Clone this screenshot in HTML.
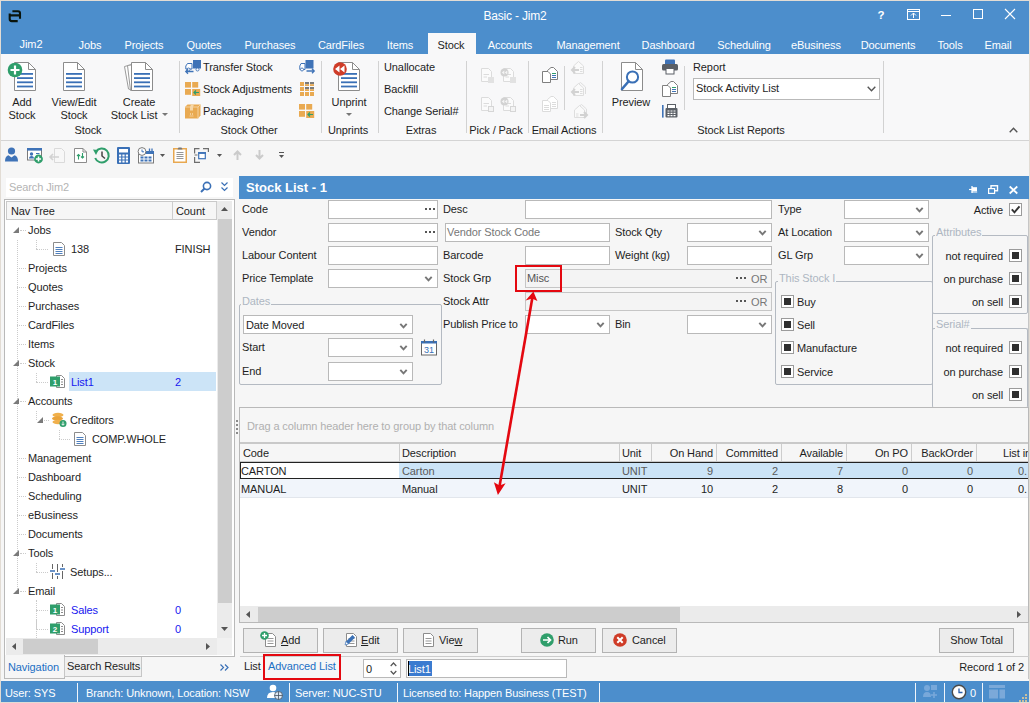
<!DOCTYPE html>
<html><head><meta charset="utf-8"><title>Basic - Jim2</title>
<style>
*{box-sizing:border-box;margin:0;padding:0}
html,body{width:1030px;height:703px;overflow:hidden;background:#f6f6f6}
body{font-family:"Liberation Sans",sans-serif;font-size:11px;color:#1e1e1e;position:relative;letter-spacing:-0.1px}
.a{position:absolute;white-space:nowrap}
.t{position:absolute;white-space:nowrap;line-height:14px;height:14px}
.c{text-align:center}
.r{text-align:right}
.w{color:#fff}
.g{color:#aeb6c2}
.g2{color:#777}
.g3{color:#777}
.bl{color:#1616f0}
svg{position:absolute;overflow:visible}
.inp{position:absolute;background:#fff;border:1px solid #b9b9b9;height:19px}
.inpg{position:absolute;background:#f4f4f4;border:1px solid #c6c6c6;height:19px}
.chev{position:absolute;width:9px;height:6px}
.vsep{position:absolute;width:1px;background:#d2d2d2}
.cb{position:absolute;width:13px;height:13px;border:1px solid #9b9b9b;background:#fff}
.cb i{position:absolute;left:2px;top:2px;width:7px;height:7px;background:#2f2f2f}
.grp{position:absolute;border:1px solid #b4bac2;border-radius:2px}
.btn{position:absolute;height:27px;border:1px solid #b3b3b3;background:#ececec}
</style></head><body>
<!-- TITLE BAR -->
<div class="a" style="left:0;top:0;width:1030px;height:54px;background:#4c8ecc"></div>


<svg style="left:0px;top:0px" width="30" height="30" viewBox="0 0 30 30"><path d="M12.4 11.2H18Q20 11.2 20 13.2V18.7M20 15.4H9.7M9.7 13.6V19Q9.7 21.1 11.8 21.1H17.7" fill="none" stroke="#0a140c" stroke-width="2.1"/></svg>
<div class="t w c" style="left:415px;top:8px;width:200px;font-size:12px;line-height:16px;height:16px;letter-spacing:-0.2px">Basic - Jim2</div>
<div class="t w c" style="left:874px;top:7px;width:14px;font-size:11.500px;font-weight:bold;line-height:16px;height:16px">?</div>
<svg style="left:907px;top:9px" width="13" height="11" viewBox="0 0 13 11"><rect x=".5" y=".5" width="12" height="10" fill="none" stroke="#fff"/><path d="M1 2.5H12M6.5 9V4M4 6.5L6.5 4L9 6.5" fill="none" stroke="#fff"/></svg>
<div class="a" style="left:941px;top:15px;width:10px;height:1px;background:#fff"></div>
<div class="a" style="left:973px;top:9px;width:10px;height:10px;border:1px solid #fff"></div>
<svg style="left:1005px;top:9px" width="10" height="10" viewBox="0 0 10 10"><path d="M0 0L10 10M10 0L0 10" stroke="#fff" stroke-width="1.1"/></svg>
<!--TITLE-->
<div class="a" style="left:428px;top:33px;width:48px;height:22px;background:#f8f8f9"></div>
<div class="t c w" style="left:-9px;top:37px;width:80px">Jim2</div>
<div class="t c w" style="left:50px;top:38px;width:80px">Jobs</div>
<div class="t c w" style="left:104px;top:38px;width:80px">Projects</div>
<div class="t c w" style="left:164px;top:38px;width:80px">Quotes</div>
<div class="t c w" style="left:230px;top:38px;width:80px">Purchases</div>
<div class="t c w" style="left:301px;top:38px;width:80px">CardFiles</div>
<div class="t c w" style="left:360px;top:38px;width:80px">Items</div>
<div class="t c" style="left:411px;top:38px;width:80px">Stock</div>
<div class="t c w" style="left:470px;top:38px;width:80px">Accounts</div>
<div class="t c w" style="left:548px;top:38px;width:80px">Management</div>
<div class="t c w" style="left:628px;top:38px;width:80px">Dashboard</div>
<div class="t c w" style="left:704px;top:38px;width:80px">Scheduling</div>
<div class="t c w" style="left:776px;top:38px;width:80px">eBusiness</div>
<div class="t c w" style="left:848px;top:38px;width:80px">Documents</div>
<div class="t c w" style="left:910px;top:38px;width:80px">Tools</div>
<div class="t c w" style="left:958px;top:38px;width:80px">Email</div>
<!--TABS-->
<!-- RIBBON -->
<div class="a" style="left:0;top:54px;width:1030px;height:87px;background:#f8f8f9;border-bottom:1px solid #d4d4d4"></div>
<svg style="left:14px;top:62px" width="22" height="29" viewBox="0 0 22 29"><path d="M.5 .5H14.5 L21.5 7.5 V28.5 H.5Z" fill="#fff" stroke="#8c8c8c"/><path d="M14.5 .5V7.5 H21.5" fill="none" stroke="#8c8c8c"/><rect x="3" y="11" width="16" height="1.8" fill="#3a70b6"/><rect x="3" y="15.2" width="16" height="1.8" fill="#3a70b6"/><rect x="3" y="19.4" width="16" height="1.8" fill="#3a70b6"/><rect x="3" y="23.6" width="16" height="1.8" fill="#3a70b6"/></svg><svg style="left:7px;top:62px" width="16" height="16" viewBox="0 0 16 16"><circle cx="8" cy="8" r="7.3" fill="#2f9e6b"/><path d="M8 3.5V12.5M3.5 8H12.5" stroke="#fff" stroke-width="2.2"/></svg><div class="t c" style="left:-18px;top:95px;width:80px">Add</div><div class="t c" style="left:-18px;top:108px;width:80px">Stock</div><svg style="left:63px;top:62px" width="22" height="29" viewBox="0 0 22 29"><path d="M.5 .5H14.5 L21.5 7.5 V28.5 H.5Z" fill="#fff" stroke="#8c8c8c"/><path d="M14.5 .5V7.5 H21.5" fill="none" stroke="#8c8c8c"/><rect x="3" y="11" width="16" height="1.8" fill="#3a70b6"/><rect x="3" y="15.2" width="16" height="1.8" fill="#3a70b6"/><rect x="3" y="19.4" width="16" height="1.8" fill="#3a70b6"/><rect x="3" y="23.6" width="16" height="1.8" fill="#3a70b6"/></svg><div class="t c" style="left:34px;top:95px;width:80px">View/Edit</div><div class="t c" style="left:34px;top:108px;width:80px">Stock</div><svg style="left:124px;top:64px" width="12" height="27" viewBox="0 0 12 27"><path d="M.5 2.5L8 .5V26L4.5 25Z" fill="#fff" stroke="#9a9a9a"/><path d="M3.5 1.5L10 .5V26.5H6.5Z" fill="#fff" stroke="#9a9a9a"/></svg><svg style="left:131px;top:62px" width="22" height="29" viewBox="0 0 22 29"><path d="M.5 .5H14.5 L21.5 7.5 V28.5 H.5Z" fill="#fff" stroke="#8c8c8c"/><path d="M14.5 .5V7.5 H21.5" fill="none" stroke="#8c8c8c"/><rect x="3" y="11" width="16" height="1.8" fill="#3a70b6"/><rect x="3" y="15.2" width="16" height="1.8" fill="#3a70b6"/><rect x="3" y="19.4" width="16" height="1.8" fill="#3a70b6"/><rect x="3" y="23.6" width="16" height="1.8" fill="#3a70b6"/></svg><div class="t c" style="left:99px;top:95px;width:80px">Create</div><div class="t c" style="left:94px;top:108px;width:80px">Stock List</div><svg style="left:162px;top:113px" width="6" height="3" viewBox="0 0 6 3"><path d="M0 0H6L3 3Z" fill="#777"/></svg><div class="t c" style="left:48px;top:123px;width:80px">Stock</div><div class="vsep" style="left:179px;top:61px;height:72px"></div><div class="vsep" style="left:321px;top:61px;height:72px"></div><div class="vsep" style="left:378px;top:61px;height:72px"></div><div class="vsep" style="left:466px;top:61px;height:72px"></div><div class="vsep" style="left:528px;top:61px;height:72px"></div><div class="vsep" style="left:602px;top:61px;height:72px"></div><div class="vsep" style="left:883px;top:61px;height:72px"></div><svg style="left:185px;top:60px" width="16" height="13" viewBox="0 0 16 13"><rect x="8" y="0" width="8" height="8.5" fill="#3f73b7"/><path d="M2.5 3.5H7V9H.8V6Z" fill="#fff" stroke="#3f73b7" stroke-width="1"/><circle cx="3.5" cy="9.5" r="1.5" fill="#fff" stroke="#3f73b7" stroke-width=".9"/><circle cx="12.5" cy="9.5" r="1.5" fill="#fff" stroke="#3f73b7" stroke-width=".9"/><path d="M.8 11.5H8.5M3 9.3L.8 11.5L3 13.7" stroke="#3f73b7" stroke-width="1.3" fill="none"/></svg><svg style="left:185px;top:82px" width="16" height="15" viewBox="0 0 16 15"><rect x="0" y="0" width="6" height="5.6" fill="#e9aa52"/><rect x="7.2" y="0" width="6" height="5.6" fill="#e9aa52"/><rect x="0" y="7" width="6" height="5.8" fill="#e9aa52"/><rect x="7.2" y="7" width="8" height="7" fill="#e9aa52"/><path d="M9 10.5H14M11 8.5L9 10.5L11 12.5" stroke="#2f9e6b" stroke-width="1.2" fill="none"/></svg><svg style="left:185px;top:104px" width="16" height="15" viewBox="0 0 16 15"><path d="M0 3L2.5 .5H15.5V11.5L13 14.5H0Z" fill="#e9aa52"/><path d="M0 3H13V14.5M13 3L15.5 .5" stroke="#f6d7a8" fill="none" stroke-width=".9"/><path d="M6 .5L5 3V6.5H8V3L9 .5Z" fill="#f6d7a8"/><path d="M4.5 12H8.5M5.5 9V11M7.5 9V11" stroke="#f6d7a8" stroke-width=".8"/></svg><div class="t" style="left:203px;top:60px">Transfer Stock</div><div class="t" style="left:203px;top:82px">Stock Adjustments</div><div class="t" style="left:203px;top:104px">Packaging</div><svg style="left:299px;top:60px" width="16" height="13" viewBox="0 0 16 13"><rect x="6.5" y="0" width="8" height="8.5" fill="#3f73b7"/><path d="M2 3.5H6V9.5H.8V6Z" fill="#fff" stroke="#3f73b7" stroke-width="1"/><circle cx="3" cy="9.5" r="1.5" fill="#fff" stroke="#3f73b7" stroke-width=".9"/><path d="M7.5 11H15.2M13 8.8L15.2 11L13 13.2" stroke="#3f73b7" stroke-width="1.3" fill="none"/></svg><svg style="left:300px;top:82px" width="14" height="14" viewBox="0 0 14 14"><rect x="0" y="0" width="4" height="4" fill="#e9aa52"/><rect x="0" y="5" width="4" height="4" fill="#e9aa52"/><rect x="0" y="10" width="4" height="4" fill="#e9aa52"/><rect x="5" y="0" width="4" height="2.2" fill="#7b7b7b"/><rect x="5" y="2.2" width="4" height="1.8" fill="#e9aa52"/><rect x="5" y="5" width="4" height="2.2" fill="#7b7b7b"/><rect x="5" y="7.2" width="4" height="1.8" fill="#e9aa52"/><rect x="5" y="10" width="4" height="4" fill="#e9aa52"/><rect x="10" y="0" width="4" height="2.2" fill="#7b7b7b"/><rect x="10" y="2.2" width="4" height="1.8" fill="#e9aa52"/><rect x="10" y="5" width="4" height="2.2" fill="#7b7b7b"/><rect x="10" y="7.2" width="4" height="1.8" fill="#e9aa52"/><rect x="10" y="10" width="4" height="4" fill="#e9aa52"/></svg><svg style="left:299px;top:104px" width="16" height="15" viewBox="0 0 16 15"><rect x="0" y="0" width="6" height="5.6" fill="#e9aa52"/><rect x="7.2" y="0" width="6" height="5.6" fill="#e9aa52"/><rect x="0" y="7" width="6" height="5.8" fill="#e9aa52"/><rect x="7.2" y="7" width="8" height="7" fill="#e9aa52"/><path d="M9 10.5H14M11 8.5L9 10.5L11 12.5" stroke="#2f9e6b" stroke-width="1.2" fill="none"/></svg><div class="t c" style="left:209px;top:123px;width:80px">Stock Other</div><svg style="left:338px;top:62px" width="22" height="29" viewBox="0 0 22 29"><path d="M.5 .5H14.5 L21.5 7.5 V28.5 H.5Z" fill="#fff" stroke="#8c8c8c"/><path d="M14.5 .5V7.5 H21.5" fill="none" stroke="#8c8c8c"/><rect x="3" y="11" width="16" height="1.8" fill="#3a70b6"/><rect x="3" y="15.2" width="16" height="1.8" fill="#3a70b6"/><rect x="3" y="19.4" width="16" height="1.8" fill="#3a70b6"/><rect x="3" y="23.6" width="16" height="1.8" fill="#3a70b6"/></svg><svg style="left:332px;top:61px" width="16" height="16" viewBox="0 0 16 16"><circle cx="8" cy="8" r="6.8" fill="#cf3c28"/><path d="M7.5 4.5V11.5L3 8ZM12.5 4.5V11.5L8 8Z" fill="#fff"/></svg><div class="t c" style="left:309px;top:95px;width:80px">Unprint</div><svg style="left:346px;top:113px" width="6" height="3" viewBox="0 0 6 3"><path d="M0 0H6L3 3Z" fill="#777"/></svg><div class="t c" style="left:308px;top:123px;width:80px">Unprints</div><div class="t" style="left:384px;top:60px">Unallocate</div><div class="t" style="left:384px;top:82px">Backfill</div><div class="t" style="left:384px;top:104px">Change Serial#</div><div class="t c" style="left:381px;top:123px;width:80px">Extras</div><div class="t c" style="left:456px;top:123px;width:80px">Pick / Pack</div><div class="t c" style="left:524px;top:123px;width:80px">Email Actions</div><div class="t c" style="left:681px;top:123px;width:120px">Stock List Reports</div>
<svg style="left:481px;top:68px" width="16" height="16" viewBox="0 0 16 16"><path d="M.5 .5H7.5L10.5 3.5V13.5H.5Z" fill="#fbfbfb" stroke="#dcdcdc"/><path d="M2.5 6.5H8M2.5 9H6" stroke="#dcdcdc"/><rect x="7" y="9" width="6" height="6" fill="#e2e2e2"/></svg><svg style="left:503px;top:68px" width="16" height="16" viewBox="0 0 16 16"><path d="M.5 .5H7.5L10.5 3.5V13.5H.5Z" fill="#fbfbfb" stroke="#dcdcdc"/><path d="M2.5 6.5H8M2.5 9H6" stroke="#dcdcdc"/><rect x="7" y="9" width="6" height="6" fill="#e2e2e2"/><circle cx="1.500" cy="4.500" r="4" fill="#d2d2d2"/><path d="M1.300 2.500V6.500L-1.200 4.500ZM4.300 2.500V6.500L1.800 4.500Z" fill="#f4f4f4"/></svg><svg style="left:481px;top:97px" width="16" height="16" viewBox="0 0 16 16"><path d="M.5 .5H7.5L10.5 3.5V13.5H.5Z" fill="#fbfbfb" stroke="#dcdcdc"/><path d="M2.5 6.5H8M2.5 9H6" stroke="#dcdcdc"/><rect x="7.5" y="9.5" width="5" height="5" fill="#f4f4f4" stroke="#d6d6d6"/></svg><svg style="left:503px;top:97px" width="16" height="16" viewBox="0 0 16 16"><path d="M.5 .5H7.5L10.5 3.5V13.5H.5Z" fill="#fbfbfb" stroke="#dcdcdc"/><path d="M2.5 6.5H8M2.5 9H6" stroke="#dcdcdc"/><rect x="7.5" y="9.5" width="5" height="5" fill="#f4f4f4" stroke="#d6d6d6"/><circle cx="1.500" cy="4.500" r="4" fill="#d2d2d2"/><path d="M1.300 2.500V6.500L-1.200 4.500ZM4.300 2.500V6.500L1.800 4.500Z" fill="#f4f4f4"/></svg><svg style="left:542px;top:67px" width="16" height="16" viewBox="0 0 16 16"><path d="M5.5 3.5L9 .5H11.5L15.5 4.5V12.5H5.5Z" fill="#fff" stroke="#7f7f7f"/><path d="M10 6.5H14" stroke="#2f9e6b"/><path d="M10 8.5H14M10 10.5H14" stroke="#3f73b7"/><path d="M.5 4.500H6L8.500 7V15.500H.5Z" fill="#fff" stroke="#7f7f7f"/></svg><svg style="left:542px;top:96px" width="16" height="16" viewBox="0 0 16 16"><path d="M5.5 3.5L9 .5H11.5L15.5 4.5V12.5H5.5Z" fill="#fff" stroke="#dcdcdc"/><path d="M10 6.5H14" stroke="#dcdcdc"/><path d="M10 8.5H14M10 10.5H14" stroke="#dcdcdc"/><path d="M.5 4.500H6L8.500 7V15.500H.5Z" fill="#fff" stroke="#dcdcdc"/><path d="M2 9.5H7M2 11.5H7M2 13.5H7" stroke="#dcdcdc"/></svg><div class="vsep" style="left:564px;top:66px;height:44px"></div><svg style="left:571px;top:60px" width="16" height="15" viewBox="0 0 16 15"><path d="M2.500 6L7.500 1.500L12.500 6V13.500H2.500Z" fill="#fafafa" stroke="#dedede"/><path d="M9 7.500H11.500M9 9.500H11.500M9 11.500H11.500" stroke="#dedede"/><path d="M1 10H8M4 7L1 10L4 13" stroke="#d2d2d2" stroke-width="2" fill="none"/></svg><svg style="left:571px;top:82px" width="16" height="15" viewBox="0 0 16 15"><path d="M4.500 4.500L9.500 .5L14.500 5V12" fill="none" stroke="#dedede"/><path d="M2.500 6L7.500 1.500L12.500 6V13.500H2.500Z" fill="#fafafa" stroke="#dedede"/><path d="M9 7.500H11.500M9 9.500H11.500M9 11.500H11.500" stroke="#dedede"/><path d="M1 10H8M4 7L1 10L4 13" stroke="#d2d2d2" stroke-width="2" fill="none"/></svg><svg style="left:572px;top:104px" width="16" height="15" viewBox="0 0 16 15"><path d="M4.500 4.500L9.500 .5L14.500 5V12" fill="none" stroke="#dedede"/><path d="M2.500 6L7.500 1.500L12.500 6V13.500H2.500Z" fill="#fafafa" stroke="#dedede"/><path d="M4 10H6.500M4 12H6.500" stroke="#dedede"/><path d="M8 11H14.500M12 8L15 11L12 14" stroke="#d2d2d2" stroke-width="2" fill="none"/></svg><svg style="left:620px;top:62px" width="23" height="29" viewBox="0 0 23 29"><path d="M1.5 .5H15.5L22.5 7.5V28.5H1.5Z" fill="#fff" stroke="#8c8c8c"/><path d="M15.5 .5V7.5H22.5" fill="none" stroke="#8c8c8c"/><circle cx="12.5" cy="15" r="5.6" fill="#fff" stroke="#3a70b6" stroke-width="2"/><path d="M8.5 19.5L2 27" stroke="#3a70b6" stroke-width="2.6" stroke-linecap="round"/></svg><div class="t c" style="left:591px;top:95px;width:80px">Preview</div><svg style="left:662px;top:59px" width="16" height="16" viewBox="0 0 16 16"><path d="M3 5V1.500Q3 .5 4 .5H12Q13 .5 13 1.500V5Z" fill="#3f73b7"/><rect x="0" y="5" width="16" height="6.500" rx="1.500" fill="#5a5f66"/><rect x="4" y="9.500" width="8" height="5.500" fill="#fff" stroke="#5a5f66"/></svg><svg style="left:662px;top:81px" width="16" height="16" viewBox="0 0 16 16"><path d="M5.5 3.5L9 .5H11.5L15.5 4.5V12.5H5.5Z" fill="#fff" stroke="#7f7f7f"/><path d="M10 6.5H14" stroke="#2f9e6b"/><path d="M10 8.5H14M10 10.5H14" stroke="#3f73b7"/><path d="M.5 4.500H6L8.500 7V15.500H.5Z" fill="#fff" stroke="#7f7f7f"/></svg><svg style="left:662px;top:103px" width="16" height="16" viewBox="0 0 16 16"><rect x="0" y="2" width="1.600" height="12.600" fill="#3f73b7"/><rect x="5.500" y="1.500" width="8" height="4" fill="#fff" stroke="#5a5f66"/><rect x="3.500" y="5" width="12" height="9.600" rx="1" fill="#5a5f66"/><path d="M5.500 8H13.500M5.500 10.300H13.500M5.500 12.600H13.500" stroke="#fff" stroke-width="1.200" stroke-dasharray="2 1"/></svg><div class="vsep" style="left:684px;top:66px;height:44px"></div><div class="t" style="left:693px;top:60px">Report</div><div class="inp" style="left:693px;top:78px;width:187px;height:22px"></div><div class="t" style="left:696px;top:81px">Stock Activity List</div><svg style="left:867px;top:86px" width="9" height="6" viewBox="0 0 9 6"><path d="M.7 .7L4.5 4.7L8.3 .7" fill="none" stroke="#555" stroke-width="1.4"/></svg><svg style="left:1009px;top:127px" width="9" height="6" viewBox="0 0 9 6"><path d="M.7 5.3L4.5 1.3L8.3 5.3" fill="none" stroke="#555" stroke-width="1.4"/></svg>
<!--RIBBON-->
<!-- QUICK BAR -->
<div class="a" style="left:0;top:141px;width:1030px;height:30px;background:#f6f6f6"></div>
<svg style="left:5px;top:147px" width="13" height="15" viewBox="0 0 13 15"><circle cx="6.5" cy="4" r="3.6" fill="#3f73b7"/><path d="M0 14.500Q0 9 3.500 8.300L6.500 10.500L9.500 8.300Q13 9 13 14.500Z" fill="#3f73b7"/></svg><svg style="left:27px;top:148px" width="17" height="16" viewBox="0 0 17 16"><rect x=".5" y=".5" width="14" height="11.500" fill="#fff" stroke="#7a7a7a"/><rect x="0" y="0" width="15" height="2.600" fill="#3f73b7"/><circle cx="4.500" cy="6" r="1.700" fill="#3f73b7"/><path d="M2 10.500Q2 8 4.500 8Q7 8 7 10.500Z" fill="#3f73b7"/><path d="M9 5.500H12.500" stroke="#3f73b7"/><circle cx="11.500" cy="11" r="4.400" fill="#2f9e6b"/><path d="M11.500 8.400V13.600M8.900 11H14.100" stroke="#fff" stroke-width="1.500"/></svg><svg style="left:49px;top:148px" width="16" height="16" viewBox="0 0 16 16"><path d="M5.5 .5H12.5L15.5 3.5V14.5H5.5Z" fill="#f7f7f7" stroke="#dadada"/><path d="M1 9H10M4 6L1 9L4 12" stroke="#d2d2d2" stroke-width="1.6" fill="none"/></svg><svg style="left:74px;top:148px" width="13" height="15" viewBox="0 0 13 15"><path d="M.5 .5H9L12.500 4V14.500H.5Z" fill="#fff" stroke="#8c8c8c"/><path d="M9 .5V4H12.500" fill="none" stroke="#8c8c8c"/><path d="M4.500 11.500V6.500M3 8L4.500 6.500L6 8M8.500 5V10M7 8.500L8.500 10L10 8.500" stroke="#2f9e6b" stroke-width="1.100" fill="none"/></svg><svg style="left:93px;top:147px" width="17" height="17" viewBox="0 0 17 17"><path d="M3 4.5A7 7 0 1 1 2.2 11" fill="none" stroke="#2f9e6b" stroke-width="2"/><path d="M0 2.5L5.5 3L3 8Z" fill="#2f9e6b"/><path d="M9 4.5V9L12 11.5" fill="none" stroke="#444" stroke-width="1.5"/></svg><svg style="left:117px;top:147px" width="13" height="17" viewBox="0 0 13 17"><rect x="0" y="0" width="13" height="17" rx="1" fill="#3a70b6"/><rect x="2" y="2" width="9" height="3.5" fill="#fff"/><rect x="2" y="7.5" width="2.2" height="2" fill="#fff"/><rect x="2" y="10.5" width="2.2" height="2" fill="#fff"/><rect x="2" y="13.5" width="2.2" height="2" fill="#fff"/><rect x="5.4" y="7.5" width="2.2" height="2" fill="#fff"/><rect x="5.4" y="10.5" width="2.2" height="2" fill="#fff"/><rect x="5.4" y="13.5" width="2.2" height="2" fill="#fff"/><rect x="8.8" y="7.5" width="2.2" height="2" fill="#fff"/><rect x="8.8" y="10.5" width="2.2" height="2" fill="#fff"/><rect x="8.8" y="13.5" width="2.2" height="2" fill="#fff"/></svg><svg style="left:137px;top:147px" width="17" height="17" viewBox="0 0 17 17"><rect x="1.500" y="4.500" width="15" height="11.500" fill="#fff" stroke="#7a7a7a"/><rect x="8" y="4" width="9" height="3" fill="#3f73b7"/><path d="M12.500 1.500V5M15 1.500V5" stroke="#3f73b7" stroke-width="1.300"/><path d="M3.500 10.500H15M3.500 13.500H15" stroke="#3f73b7" stroke-width="2" stroke-dasharray="3 1"/><circle cx="5" cy="4.500" r="3.900" fill="#fff" stroke="#7a7a7a"/><path d="M5 2.500V4.800H7" stroke="#3f73b7" fill="none"/></svg><svg style="left:160px;top:154px" width="5" height="3" viewBox="0 0 5 3"><path d="M0 0H5L2.5 3Z" fill="#555"/></svg><svg style="left:173px;top:147px" width="14" height="16" viewBox="0 0 14 16"><rect x=".75" y="1.750" width="12.500" height="13.500" fill="#fff" stroke="#e8a850" stroke-width="1.500"/><path d="M4.500 2.500L5.500 .5H8.500L9.500 2.500Z" fill="#777"/><path d="M3.500 5.500H10.500M3.500 7.500H10.500M3.500 9.500H10.500M3.500 11.500H10.500" stroke="#8a8a8a" stroke-width=".9"/></svg><svg style="left:194px;top:148px" width="16" height="15" viewBox="0 0 16 15"><path d="M5.500 .600H.600V5.500M.600 9V14.400H6M9 .600H14.400V4M.600 7H3.500" fill="none" stroke="#6e6e6e" stroke-width="1.200"/><rect x="4.700" y="4.700" width="6.600" height="6" fill="#fff" stroke="#3f73b7" stroke-width="1.200"/><rect x="4.100" y="4.100" width="7.800" height="1.800" fill="#3f73b7"/></svg><svg style="left:217px;top:154px" width="5" height="3" viewBox="0 0 5 3"><path d="M0 0H5L2.5 3Z" fill="#555"/></svg><svg style="left:233px;top:150px" width="9" height="10" viewBox="0 0 9 10"><path d="M4.5 10V1.5M1 5L4.5 1.5L8 5" stroke="#cbcbcb" stroke-width="2" fill="none"/></svg><svg style="left:255px;top:150px" width="9" height="10" viewBox="0 0 9 10"><path d="M4.5 0V8.5M1 5L4.5 8.5L8 5" stroke="#cbcbcb" stroke-width="2" fill="none"/></svg><svg style="left:279px;top:152px" width="5" height="6" viewBox="0 0 5 6"><path d="M0 .5H5" stroke="#555"/><path d="M0 3H5L2.5 6Z" fill="#555"/></svg>
<!--QUICK-->
<!-- LEFT PANEL -->
<div class="a" style="left:6px;top:178px;width:227px;height:19px;background:#fff"></div><div class="t" style="left:9px;top:180px;color:#b4b4b4">Search Jim2</div><svg style="left:200px;top:181px" width="12" height="12" viewBox="0 0 12 12"><circle cx="7" cy="5" r="3.6" fill="none" stroke="#3a70b6" stroke-width="1.6"/><path d="M4.5 7.5L1 11" stroke="#3a70b6" stroke-width="2"/></svg><svg style="left:221px;top:182px" width="7" height="10" viewBox="0 0 7 10"><path d="M.5 .5L3.5 3.5L6.5 .5M.5 5.5L3.5 8.5L6.5 5.5" fill="none" stroke="#3a70b6" stroke-width="1.2"/></svg><div class="a" style="left:4px;top:199px;width:231px;height:458px;background:#fff;border:1px solid #b9b9b9;border-bottom:0"></div><div class="a" style="left:64px;top:656px;width:171px;height:1px;background:#b9b9b9"></div><div class="a" style="left:6px;top:201px;width:211px;height:19px;background:#f6f6f6;border:1px solid #c9c9c9;border-width:1px 0 1px 1px"></div><div class="a" style="left:172px;top:202px;width:1px;height:17px;background:#cdcdcd"></div><div class="a" style="left:216px;top:202px;width:1px;height:17px;background:#cdcdcd"></div><div class="t" style="left:11px;top:204px">Nav Tree</div><div class="t" style="left:176px;top:204px">Count</div><div class="a" style="left:217px;top:201px;width:15px;height:437px;background:#ebebeb"></div><div class="a" style="left:217px;top:638px;width:15px;height:17px;background:#f1f1f1"></div><div class="a" style="left:218px;top:219px;width:14px;height:384px;background:#cdcdcd"></div><svg style="left:221px;top:207px" width="7" height="4" viewBox="0 0 7 4"><path d="M0 4H7L3.5 0Z" fill="#555"/></svg><svg style="left:221px;top:627px" width="7" height="4" viewBox="0 0 7 4"><path d="M0 0H7L3.5 4Z" fill="#555"/></svg><div class="a" style="left:6px;top:638px;width:211px;height:17px;background:#ebebeb"></div><div class="a" style="left:23px;top:639px;width:75px;height:15px;background:#cdcdcd"></div><svg style="left:12px;top:643px" width="4" height="7" viewBox="0 0 4 7"><path d="M4 0V7L0 3.5Z" fill="#555"/></svg><svg style="left:206px;top:643px" width="4" height="7" viewBox="0 0 4 7"><path d="M0 0V7L4 3.5Z" fill="#555"/></svg><div class="a" style="left:69px;top:372px;width:147px;height:19px;background:#cce4f7"></div><div class="a" style="left:17px;top:240px;width:0;height:351px;border-left:1px dotted #cbcbcb"></div><div class="t" style="left:28px;top:223px">Jobs</div><svg style="left:13px;top:227px" width="6" height="6" viewBox="0 0 6 6"><path d="M6 0V6H0Z" fill="#7a7a7a"/></svg><div class="a" style="left:20px;top:230px;width:6px;height:0;border-top:1px dotted #cbcbcb"></div><div class="t" style="left:71px;top:242px">138</div><div class="a" style="left:36px;top:240px;width:0;height:9px;border-left:1px dotted #cbcbcb"></div><div class="a" style="left:36px;top:249px;width:12px;height:0;border-top:1px dotted #cbcbcb"></div><svg style="left:53px;top:242px" width="12" height="14" viewBox="0 0 12 14"><path d="M.5 .5H8.5L11.5 3.5V13.5H.5Z" fill="#fff" stroke="#8c8c8c"/><path d="M2.5 5.5H9.5M2.5 7.5H9.5M2.5 9.5H9.5M2.5 11.5H9.5" stroke="#3a70b6" stroke-width=".9"/></svg><div class="t" style="left:28px;top:261px">Projects</div><div class="a" style="left:17px;top:268px;width:9px;height:0;border-top:1px dotted #cbcbcb"></div><div class="t" style="left:28px;top:280px">Quotes</div><div class="a" style="left:17px;top:287px;width:9px;height:0;border-top:1px dotted #cbcbcb"></div><div class="t" style="left:28px;top:299px">Purchases</div><div class="a" style="left:17px;top:306px;width:9px;height:0;border-top:1px dotted #cbcbcb"></div><div class="t" style="left:28px;top:318px">CardFiles</div><div class="a" style="left:17px;top:325px;width:9px;height:0;border-top:1px dotted #cbcbcb"></div><div class="t" style="left:28px;top:337px">Items</div><div class="a" style="left:17px;top:344px;width:9px;height:0;border-top:1px dotted #cbcbcb"></div><div class="t" style="left:28px;top:356px">Stock</div><svg style="left:13px;top:360px" width="6" height="6" viewBox="0 0 6 6"><path d="M6 0V6H0Z" fill="#7a7a7a"/></svg><div class="a" style="left:20px;top:363px;width:6px;height:0;border-top:1px dotted #cbcbcb"></div><div class="t bl" style="left:71px;top:375px">List1</div><div class="a" style="left:36px;top:373px;width:0;height:9px;border-left:1px dotted #cbcbcb"></div><div class="a" style="left:36px;top:382px;width:12px;height:0;border-top:1px dotted #cbcbcb"></div><svg style="left:50px;top:375px" width="15" height="13" viewBox="0 0 15 13"><path d="M6.5 .5H11.5L14.5 3.5V12.5H6.5Z" fill="#fff" stroke="#8c8c8c"/><path d="M11 4.5H13M11 7H13M11 9.5H13" stroke="#8c8c8c"/><rect x="0" y="1.5" width="10" height="10" fill="#2f9e6b"/><text x="5" y="10" font-size="8" font-weight="bold" fill="#fff" text-anchor="middle" font-family="Liberation Sans,sans-serif">1</text></svg><div class="t" style="left:28px;top:394px">Accounts</div><svg style="left:13px;top:398px" width="6" height="6" viewBox="0 0 6 6"><path d="M6 0V6H0Z" fill="#7a7a7a"/></svg><div class="a" style="left:20px;top:401px;width:6px;height:0;border-top:1px dotted #cbcbcb"></div><div class="t" style="left:70px;top:413px">Creditors</div><svg style="left:37px;top:417px" width="6" height="6" viewBox="0 0 6 6"><path d="M6 0V6H0Z" fill="#7a7a7a"/></svg><svg style="left:51px;top:412px" width="16" height="15" viewBox="0 0 16 15"><ellipse cx="7" cy="3" rx="5.5" ry="2.2" fill="#f0b04c"/><ellipse cx="6.5" cy="6.5" rx="5.5" ry="2.2" fill="#e9a33b"/><ellipse cx="7" cy="10" rx="5.5" ry="2.2" fill="#f0b04c"/><circle cx="12" cy="11.5" r="3.5" fill="#2f9e6b"/><path d="M12 9.5V13M10.5 11.8L12 13.3L13.5 11.8" stroke="#fff" fill="none" stroke-width=".9"/></svg><div class="t" style="left:92px;top:432px">COMP.WHOLE</div><div class="a" style="left:59px;top:430px;width:0;height:9px;border-left:1px dotted #cbcbcb"></div><div class="a" style="left:59px;top:439px;width:11px;height:0;border-top:1px dotted #cbcbcb"></div><svg style="left:74px;top:432px" width="12" height="14" viewBox="0 0 12 14"><path d="M.5 .5H8.5L11.5 3.5V13.5H.5Z" fill="#fff" stroke="#8c8c8c"/><path d="M2.5 5.5H9.5M2.5 7.5H9.5M2.5 9.5H9.5M2.5 11.5H9.5" stroke="#3a70b6" stroke-width=".9"/></svg><div class="t" style="left:28px;top:451px">Management</div><div class="a" style="left:17px;top:458px;width:9px;height:0;border-top:1px dotted #cbcbcb"></div><div class="t" style="left:28px;top:470px">Dashboard</div><div class="a" style="left:17px;top:477px;width:9px;height:0;border-top:1px dotted #cbcbcb"></div><div class="t" style="left:28px;top:489px">Scheduling</div><div class="a" style="left:17px;top:496px;width:9px;height:0;border-top:1px dotted #cbcbcb"></div><div class="t" style="left:28px;top:508px">eBusiness</div><div class="a" style="left:17px;top:515px;width:9px;height:0;border-top:1px dotted #cbcbcb"></div><div class="t" style="left:28px;top:527px">Documents</div><div class="a" style="left:17px;top:534px;width:9px;height:0;border-top:1px dotted #cbcbcb"></div><div class="t" style="left:28px;top:546px">Tools</div><svg style="left:13px;top:550px" width="6" height="6" viewBox="0 0 6 6"><path d="M6 0V6H0Z" fill="#7a7a7a"/></svg><div class="a" style="left:20px;top:553px;width:6px;height:0;border-top:1px dotted #cbcbcb"></div><div class="t" style="left:70px;top:565px">Setups...</div><div class="a" style="left:36px;top:563px;width:0;height:9px;border-left:1px dotted #cbcbcb"></div><div class="a" style="left:36px;top:572px;width:12px;height:0;border-top:1px dotted #cbcbcb"></div><svg style="left:50px;top:564px" width="15" height="15" viewBox="0 0 15 15"><path d="M2.5 0V5M2.5 9V15M7.5 0V8M7.5 12V15M12.5 0V3M12.5 7V15" stroke="#666" stroke-width="1"/><path d="M0 7H5M5 10H10M10 5H15" stroke="#3a70b6" stroke-width="1.5"/></svg><div class="t" style="left:28px;top:584px">Email</div><svg style="left:13px;top:588px" width="6" height="6" viewBox="0 0 6 6"><path d="M6 0V6H0Z" fill="#7a7a7a"/></svg><div class="a" style="left:20px;top:591px;width:6px;height:0;border-top:1px dotted #cbcbcb"></div><div class="t bl" style="left:71px;top:603px">Sales</div><div class="a" style="left:36px;top:601px;width:0;height:9px;border-left:1px dotted #cbcbcb"></div><div class="a" style="left:36px;top:610px;width:12px;height:0;border-top:1px dotted #cbcbcb"></div><svg style="left:50px;top:603px" width="15" height="13" viewBox="0 0 15 13"><path d="M6.5 .5H11.5L14.5 3.5V12.5H6.5Z" fill="#fff" stroke="#8c8c8c"/><path d="M11 4.5H13M11 7H13M11 9.5H13" stroke="#8c8c8c"/><rect x="0" y="1.5" width="10" height="10" fill="#2f9e6b"/><text x="5" y="10" font-size="8" font-weight="bold" fill="#fff" text-anchor="middle" font-family="Liberation Sans,sans-serif">1</text></svg><div class="t bl" style="left:71px;top:622px">Support</div><div class="a" style="left:36px;top:620px;width:0;height:9px;border-left:1px dotted #cbcbcb"></div><div class="a" style="left:36px;top:629px;width:12px;height:0;border-top:1px dotted #cbcbcb"></div><svg style="left:50px;top:622px" width="15" height="13" viewBox="0 0 15 13"><path d="M6.5 .5H11.5L14.5 3.5V12.5H6.5Z" fill="#fff" stroke="#8c8c8c"/><path d="M11 4.5H13M11 7H13M11 9.5H13" stroke="#8c8c8c"/><rect x="0" y="1.5" width="10" height="10" fill="#2f9e6b"/><text x="5" y="10" font-size="8" font-weight="bold" fill="#fff" text-anchor="middle" font-family="Liberation Sans,sans-serif">2</text></svg><div class="a" style="left:36px;top:600px;width:0;height:38px;border-left:1px dotted #cbcbcb"></div><div class="t" style="left:175px;top:242px">FINISH</div><div class="t bl" style="left:175px;top:375px">2</div><div class="t bl" style="left:175px;top:603px">0</div><div class="t bl" style="left:175px;top:622px">0</div><div class="a" style="left:4px;top:655px;width:61px;height:24px;background:#f6f6f6;border:1px solid #b9b9b9;border-top:0"></div><div class="t" style="left:8px;top:660px;color:#1c6fc4">Navigation</div><div class="a" style="left:64px;top:657px;width:78px;height:20px;background:#f0f0f0;border:1px solid #c6c6c6;border-top:0"></div><div class="t" style="left:67px;top:659px">Search Results</div><svg style="left:220px;top:664px" width="9" height="7" viewBox="0 0 9 7"><path d="M.5 .5L3.5 3.5L.5 6.5M5 .5L8 3.5L5 6.5" fill="none" stroke="#3a70b6" stroke-width="1.2"/></svg>
<div class="a" style="left:36px;top:411px;width:0;height:9px;border-left:1px dotted #cbcbcb"></div><div class="a" style="left:44px;top:420px;width:5px;height:0;border-top:1px dotted #cbcbcb"></div>
<!--LEFT-->
<!-- MAIN -->
<div class="a" style="left:239px;top:176px;width:790px;height:503px;background:#f6f6f6;border-right:1px solid #c6c6c6"></div><div class="a" style="left:239px;top:176px;width:790px;height:23px;background:#4c8ecc"></div><div class="t w" style="left:246px;top:180px;font-size:13px;font-weight:bold;line-height:16px;height:16px;letter-spacing:0">Stock List - 1</div><svg style="left:969px;top:186px" width="9" height="8" viewBox="0 0 9 8"><path d="M0 3.500H3" stroke="#fff" stroke-width="1.200"/><path d="M3 0V7" stroke="#fff" stroke-width="1.300"/><rect x="3" y="1.200" width="5" height="4" fill="#fff"/><path d="M3 6H8.200" stroke="#fff" stroke-width="1"/></svg><svg style="left:988px;top:185px" width="10" height="9" viewBox="0 0 10 9"><rect x="3" y=".75" width="6.500" height="5" fill="none" stroke="#fff" stroke-width="1.400"/><rect x=".6" y="3.600" width="6" height="4.800" fill="#4c8ecc" stroke="#fff" stroke-width="1.200"/></svg><svg style="left:1009px;top:186px" width="9" height="8" viewBox="0 0 9 8"><path d="M.7 .5L8.300 7.500M8.300 .5L.7 7.500" stroke="#fff" stroke-width="1.700"/></svg><div class="t " style="left:242px;top:202px">Code</div><div class="inp" style="left:328px;top:200px;width:110px;height:19px"></div><div class="a" style="left:425px;top:208px;width:2px;height:2px;background:#555"></div><div class="a" style="left:429px;top:208px;width:2px;height:2px;background:#555"></div><div class="a" style="left:433px;top:208px;width:2px;height:2px;background:#555"></div><div class="t " style="left:242px;top:225px">Vendor</div><div class="inp" style="left:328px;top:223px;width:110px;height:19px"></div><div class="a" style="left:425px;top:231px;width:2px;height:2px;background:#555"></div><div class="a" style="left:429px;top:231px;width:2px;height:2px;background:#555"></div><div class="a" style="left:433px;top:231px;width:2px;height:2px;background:#555"></div><div class="t " style="left:242px;top:248px">Labour Content</div><div class="inp" style="left:328px;top:246px;width:110px;height:19px"></div><div class="t " style="left:242px;top:271px">Price Template</div><div class="inp" style="left:328px;top:269px;width:110px;height:19px"></div><svg style="left:424px;top:276px" width="9" height="6" viewBox="0 0 9 6"><path d="M1.300 .8L4.500 4.400L7.700 .8" fill="none" stroke="#777" stroke-width="1.900"/></svg><div class="grp" style="left:239px;top:304px;width:203px;height:81px"></div><div class="t g" style="left:241px;top:294px;background:#f6f6f6;padding:0 1px">Dates</div><div class="inp" style="left:243px;top:315px;width:170px;height:19px"></div><svg style="left:399px;top:323px" width="9" height="6" viewBox="0 0 9 6"><path d="M1.300 .8L4.500 4.400L7.700 .8" fill="none" stroke="#777" stroke-width="1.900"/></svg><div class="t " style="left:246px;top:318px">Date Moved</div><div class="t " style="left:242px;top:340px">Start</div><div class="inp" style="left:328px;top:338px;width:85px;height:19px"></div><svg style="left:399px;top:345px" width="9" height="6" viewBox="0 0 9 6"><path d="M1.300 .8L4.500 4.400L7.700 .8" fill="none" stroke="#777" stroke-width="1.900"/></svg><div class="t " style="left:242px;top:364px">End</div><div class="inp" style="left:328px;top:362px;width:85px;height:19px"></div><svg style="left:399px;top:369px" width="9" height="6" viewBox="0 0 9 6"><path d="M1.300 .8L4.500 4.400L7.700 .8" fill="none" stroke="#777" stroke-width="1.900"/></svg><svg style="left:421px;top:339px" width="16" height="17" viewBox="0 0 16 17"><rect x=".5" y="2.500" width="15" height="13.500" fill="#fff" stroke="#666"/><rect x="0" y="2" width="16" height="2.500" fill="#3a70b6"/><path d="M3.500 .5V3.500M12.500 .5V3.500" stroke="#666" stroke-width="1.200"/><text x="8" y="13.500" font-size="9" fill="#3a70b6" text-anchor="middle" font-family="Liberation Sans,sans-serif">31</text></svg><div class="t " style="left:443px;top:202px">Desc</div><div class="inp" style="left:525px;top:200px;width:247px;height:19px"></div><div class="inp" style="left:445px;top:223px;width:165px;height:19px"></div><div class="t g3" style="left:447px;top:225px">Vendor Stock Code</div><div class="t " style="left:443px;top:248px">Barcode</div><div class="inp" style="left:525px;top:246px;width:85px;height:19px"></div><div class="t " style="left:443px;top:271px">Stock Grp</div><div class="inpg" style="left:525px;top:269px;width:247px;height:19px"></div><div class="t" style="left:527px;top:271px;color:#555">Misc</div><div class="a" style="left:736px;top:277px;width:2px;height:2px;background:#555"></div><div class="a" style="left:740px;top:277px;width:2px;height:2px;background:#555"></div><div class="a" style="left:744px;top:277px;width:2px;height:2px;background:#555"></div><div class="t g2" style="left:751px;top:272px">OR</div><div class="t " style="left:443px;top:294px">Stock Attr</div><div class="inpg" style="left:525px;top:292px;width:247px;height:19px"></div><div class="a" style="left:736px;top:300px;width:2px;height:2px;background:#555"></div><div class="a" style="left:740px;top:300px;width:2px;height:2px;background:#555"></div><div class="a" style="left:744px;top:300px;width:2px;height:2px;background:#555"></div><div class="t g2" style="left:751px;top:295px">OR</div><div class="t " style="left:443px;top:317px">Publish Price to</div><div class="inp" style="left:525px;top:315px;width:85px;height:19px"></div><svg style="left:596px;top:322px" width="9" height="6" viewBox="0 0 9 6"><path d="M1.300 .8L4.500 4.400L7.700 .8" fill="none" stroke="#777" stroke-width="1.900"/></svg><div class="t " style="left:615px;top:225px">Stock Qty</div><div class="inp" style="left:687px;top:223px;width:85px;height:19px"></div><svg style="left:758px;top:230px" width="9" height="6" viewBox="0 0 9 6"><path d="M1.300 .8L4.500 4.400L7.700 .8" fill="none" stroke="#777" stroke-width="1.900"/></svg><div class="t " style="left:615px;top:248px">Weight (kg)</div><div class="inp" style="left:687px;top:246px;width:85px;height:19px"></div><div class="t " style="left:615px;top:317px">Bin</div><div class="inp" style="left:687px;top:315px;width:85px;height:19px"></div><svg style="left:758px;top:322px" width="9" height="6" viewBox="0 0 9 6"><path d="M1.300 .8L4.500 4.400L7.700 .8" fill="none" stroke="#777" stroke-width="1.900"/></svg><div class="t " style="left:778px;top:202px">Type</div><div class="inp" style="left:844px;top:200px;width:85px;height:19px"></div><svg style="left:915px;top:207px" width="9" height="6" viewBox="0 0 9 6"><path d="M1.300 .8L4.500 4.400L7.700 .8" fill="none" stroke="#777" stroke-width="1.900"/></svg><div class="t " style="left:778px;top:225px">At Location</div><div class="inp" style="left:844px;top:223px;width:85px;height:19px"></div><svg style="left:915px;top:230px" width="9" height="6" viewBox="0 0 9 6"><path d="M1.300 .8L4.500 4.400L7.700 .8" fill="none" stroke="#777" stroke-width="1.900"/></svg><div class="t " style="left:778px;top:248px">GL Grp</div><div class="inp" style="left:844px;top:246px;width:85px;height:19px"></div><svg style="left:915px;top:253px" width="9" height="6" viewBox="0 0 9 6"><path d="M1.300 .8L4.500 4.400L7.700 .8" fill="none" stroke="#777" stroke-width="1.900"/></svg><div class="grp" style="left:775px;top:281px;width:158px;height:104px"></div><div class="t g" style="left:778px;top:271px;background:#f6f6f6;padding:0 1px">This Stock I</div><div class="cb" style="left:781px;top:295px"><i></i></div><div class="t " style="left:797px;top:295px">Buy</div><div class="cb" style="left:781px;top:318px"><i></i></div><div class="t " style="left:797px;top:318px">Sell</div><div class="cb" style="left:781px;top:341px"><i></i></div><div class="t " style="left:797px;top:341px">Manufacture</div><div class="cb" style="left:781px;top:365px"><i></i></div><div class="t " style="left:797px;top:365px">Service</div><div class="t r " style="left:883px;top:203px;width:120px">Active</div><div class="cb" style="left:1009px;top:203px"></div><svg style="left:1011px;top:205px" width="9" height="9" viewBox="0 0 9 9"><path d="M.8 4.300L3.500 7.300L8.500 1.300" fill="none" stroke="#333" stroke-width="1.900"/></svg><div class="grp" style="left:932px;top:235px;width:96px;height:79px"></div><div class="t g" style="left:935px;top:225px;background:#f6f6f6;padding:0 1px">Attributes</div><div class="t r " style="left:883px;top:249px;width:120px">not required</div><div class="cb" style="left:1009px;top:249px"><i></i></div><div class="t r " style="left:883px;top:272px;width:120px">on purchase</div><div class="cb" style="left:1009px;top:272px"><i></i></div><div class="t r " style="left:883px;top:295px;width:120px">on sell</div><div class="cb" style="left:1009px;top:295px"><i></i></div><div class="grp" style="left:932px;top:328px;width:96px;height:80px;border-bottom:0"></div><div class="t g" style="left:935px;top:317px;background:#f6f6f6;padding:0 1px">Serial#</div><div class="t r " style="left:883px;top:341px;width:120px">not required</div><div class="cb" style="left:1009px;top:341px"><i></i></div><div class="t r " style="left:883px;top:365px;width:120px">on purchase</div><div class="cb" style="left:1009px;top:365px"><i></i></div><div class="t r " style="left:883px;top:388px;width:120px">on sell</div><div class="cb" style="left:1009px;top:388px"><i></i></div>
<div class="a" style="left:239px;top:407px;width:790px;height:216px;background:#fff;border:1px solid #b9b9b9"></div><div class="a" style="left:240px;top:408px;width:788px;height:35px;background:#f6f6f6;border-bottom:1px solid #c9c9c9"></div><div class="t" style="left:247px;top:419px;color:#b0b0b0">Drag a column header here to group by that column</div><div class="a" style="left:236px;top:420px;width:2px;height:2px;background:#8a8a8a"></div><div class="a" style="left:236px;top:424px;width:2px;height:2px;background:#8a8a8a"></div><div class="a" style="left:236px;top:428px;width:2px;height:2px;background:#8a8a8a"></div><div class="a" style="left:236px;top:432px;width:2px;height:2px;background:#8a8a8a"></div><div class="a" style="left:240px;top:443px;width:788px;height:19px;background:#f6f6f6;border:1px solid #c9c9c9;border-width:1px 0 1px 0"></div><div class="t" style="left:243px;top:446px">Code</div><div class="a" style="left:399px;top:444px;width:1px;height:17px;background:#cdcdcd"></div><div class="t" style="left:402px;top:446px">Description</div><div class="a" style="left:619px;top:444px;width:1px;height:17px;background:#cdcdcd"></div><div class="t" style="left:622px;top:446px">Unit</div><div class="a" style="left:651px;top:444px;width:1px;height:17px;background:#cdcdcd"></div><div class="t r" style="left:651px;top:446px;width:62px">On Hand</div><div class="a" style="left:716px;top:444px;width:1px;height:17px;background:#cdcdcd"></div><div class="t r" style="left:716px;top:446px;width:62px">Committed</div><div class="a" style="left:781px;top:444px;width:1px;height:17px;background:#cdcdcd"></div><div class="t r" style="left:781px;top:446px;width:62px">Available</div><div class="a" style="left:846px;top:444px;width:1px;height:17px;background:#cdcdcd"></div><div class="t r" style="left:846px;top:446px;width:62px">On PO</div><div class="a" style="left:911px;top:444px;width:1px;height:17px;background:#cdcdcd"></div><div class="t r" style="left:911px;top:446px;width:62px">BackOrder</div><div class="a" style="left:976px;top:444px;width:1px;height:17px;background:#cdcdcd"></div><div class="t" style="left:1003px;top:446px;width:25px;overflow:hidden">List in</div><div class="a" style="left:240px;top:462px;width:788px;height:17px;background:#cce4f7;border-top:1px solid #222;border-bottom:1px solid #222"></div><div class="a" style="left:240px;top:462px;width:159px;height:17px;background:#fff;border:1px solid #222;border-right:0"></div><div class="a" style="left:240px;top:479px;width:788px;height:19px;background:#f1f5fb;border-bottom:1px solid #e2e6ec"></div><div class="t" style="left:241px;top:464px">CARTON</div><div class="t" style="color:#5a5a5a;left:402px;top:464px">Carton</div><div class="t" style="color:#5a5a5a;left:622px;top:464px">UNIT</div><div class="t r" style="color:#5a5a5a;left:651px;top:464px;width:62px">9</div><div class="t r" style="color:#5a5a5a;left:716px;top:464px;width:62px">2</div><div class="t r" style="color:#5a5a5a;left:781px;top:464px;width:62px">7</div><div class="t r" style="color:#5a5a5a;left:846px;top:464px;width:62px">0</div><div class="t r" style="color:#5a5a5a;left:911px;top:464px;width:62px">0</div><div class="t" style="color:#5a5a5a;left:1018px;top:464px;width:10px;overflow:hidden">0.</div><div class="t" style="left:241px;top:482px">MANUAL</div><div class="t" style="left:402px;top:482px">Manual</div><div class="t" style="left:622px;top:482px">UNIT</div><div class="t r" style="left:651px;top:482px;width:62px">10</div><div class="t r" style="left:716px;top:482px;width:62px">2</div><div class="t r" style="left:781px;top:482px;width:62px">8</div><div class="t r" style="left:846px;top:482px;width:62px">0</div><div class="t r" style="left:911px;top:482px;width:62px">0</div><div class="t" style="left:1018px;top:482px;width:10px;overflow:hidden">0.</div><div class="a" style="left:240px;top:606px;width:788px;height:16px;background:#ebebeb"></div><div class="a" style="left:258px;top:607px;width:422px;height:15px;background:#cdcdcd"></div><svg style="left:246px;top:611px" width="4" height="7" viewBox="0 0 4 7"><path d="M4 0V7L0 3.5Z" fill="#555"/></svg><svg style="left:1017px;top:611px" width="4" height="7" viewBox="0 0 4 7"><path d="M0 0V7L4 3.5Z" fill="#555"/></svg><div class="btn" style="left:243px;top:628px;width:75px;height:25px"></div><div class="btn" style="left:323px;top:628px;width:75px;height:25px"></div><div class="btn" style="left:403px;top:628px;width:75px;height:25px"></div><div class="btn" style="left:521px;top:628px;width:75px;height:25px"></div><div class="btn" style="left:602px;top:628px;width:75px;height:25px"></div><div class="btn" style="left:939px;top:628px;width:75px;height:25px"></div><svg style="left:265px;top:633px" width="11" height="14" viewBox="0 0 11 14"><path d="M.5 .5H7.5L10.5 3.5V13.5H.5Z" fill="#fff" stroke="#8c8c8c"/><path d="M2.5 5.5H8.5M2.5 8H8.5M2.5 10.5H8.5" stroke="#8c8c8c" stroke-width=".9"/></svg><svg style="left:260px;top:631px" width="9" height="9" viewBox="0 0 9 9"><circle cx="4.5" cy="4.5" r="4.3" fill="#2f9e6b"/><path d="M4.5 2V7M2 4.5H7" stroke="#fff" stroke-width="1.3"/></svg><div class="t" style="left:281px;top:633px"><u>A</u>dd</div><svg style="left:346px;top:633px" width="11" height="14" viewBox="0 0 11 14"><path d="M.5 .5H7.5L10.5 3.5V13.5H.5Z" fill="#fff" stroke="#8c8c8c"/><path d="M2.5 5.5H8.5M2.5 8H8.5M2.5 10.5H8.5" stroke="#8c8c8c" stroke-width=".9"/></svg><svg style="left:344px;top:634px" width="12" height="12" viewBox="0 0 12 12"><path d="M1 11L2 7.5L8.5 1L11 3.5L4.5 10Z" fill="#3a70b6"/><path d="M1 11L2 7.5L4.5 10Z" fill="#fff" stroke="#3a70b6" stroke-width=".6"/></svg><div class="t" style="left:361px;top:633px"><u>E</u>dit</div><svg style="left:423px;top:633px" width="11" height="14" viewBox="0 0 11 14"><path d="M.5 .5H7.5L10.5 3.5V13.5H.5Z" fill="#fff" stroke="#8c8c8c"/><path d="M2.5 5.5H8.5M2.5 8H8.5M2.5 10.5H8.5" stroke="#8c8c8c" stroke-width=".9"/></svg><div class="t" style="left:439px;top:633px">Vie<u>w</u></div><svg style="left:540px;top:633px" width="14" height="14" viewBox="0 0 14 14"><circle cx="7" cy="7" r="6.8" fill="#2f9e6b"/><path d="M3 7H10.5M7.5 4L10.5 7L7.5 10" stroke="#fff" stroke-width="1.7" fill="none"/></svg><div class="t" style="left:558px;top:633px">Run</div><svg style="left:613px;top:633px" width="14" height="14" viewBox="0 0 14 14"><circle cx="7" cy="7" r="6.8" fill="#cf3c28"/><path d="M4.3 4.3L9.7 9.7M9.7 4.3L4.3 9.7" stroke="#fff" stroke-width="2"/></svg><div class="t" style="left:632px;top:633px">Cancel</div><div class="t c" style="left:939px;top:633px;width:75px">Show Total</div><div class="a" style="left:240px;top:656px;width:789px;height:1px;background:#cdcdcd"></div><div class="t" style="left:244px;top:659px">List</div><div class="t" style="left:268px;top:659px;color:#1c6fc4">Advanced List</div><div class="inp" style="left:363px;top:659px;width:38px;height:19px"></div><div class="t" style="left:366px;top:662px">0</div><svg style="left:390px;top:662px" width="7" height="13" viewBox="0 0 7 13"><path d="M.7 4L3.5 1L6.3 4M.7 9L3.5 12L6.3 9" fill="none" stroke="#555" stroke-width="1.2"/></svg><div class="inp" style="left:406px;top:659px;width:161px;height:19px"></div><div class="a" style="left:408px;top:661px;width:24px;height:15px;background:#3b7bd0"></div><div class="t w" style="left:408px;top:662px">List1</div><div class="a" style="left:408px;top:661px;width:1px;height:15px;background:#000"></div><div class="t r" style="left:904px;top:660px;width:120px">Record 1 of 2</div>
<!--MAIN-->
<!-- STATUS -->
<div class="a" style="left:0;top:681px;width:1030px;height:22px;background:#4c8ecc"></div><div class="a" style="left:77px;top:683px;width:1px;height:19px;background:#f0f5fb"></div><div class="a" style="left:289px;top:683px;width:1px;height:19px;background:#f0f5fb"></div><div class="a" style="left:397px;top:683px;width:1px;height:19px;background:#f0f5fb"></div><div class="a" style="left:599px;top:683px;width:1px;height:19px;background:#f0f5fb"></div><div class="a" style="left:915px;top:683px;width:1px;height:19px;background:#f0f5fb"></div><div class="a" style="left:944px;top:683px;width:1px;height:19px;background:#f0f5fb"></div><div class="a" style="left:982px;top:683px;width:1px;height:19px;background:#f0f5fb"></div><div class="t w" style="left:5px;top:686px">User: SYS</div><div class="t w" style="left:86px;top:686px">Branch: Unknown, Location: NSW</div><div class="t w" style="left:295px;top:686px">Server: NUC-STU</div><div class="t w" style="left:403px;top:686px">Licensed to: Happen Business (TEST)</div><svg style="left:267px;top:684px" width="16" height="16" viewBox="0 0 16 16"><circle cx="6" cy="4" r="3.3" fill="#fff"/><path d="M0 14Q0 8 6 8Q9 8 10 10V14Z" fill="#fff"/><circle cx="11.5" cy="11.5" r="4" fill="#dfe9f5" stroke="#44515f" stroke-width=".8"/><path d="M7.5 11.5H15.5M11.5 7.5V15.5" stroke="#44515f" stroke-width=".8"/></svg><svg style="left:923px;top:684px" width="15" height="15" viewBox="0 0 15 15"><circle cx="4" cy="4" r="3" fill="#78a8da"/><path d="M0 13Q0 8 4 8Q8 8 8 13Z" fill="#78a8da"/><rect x="8" y="1" width="6" height="5" fill="#78a8da"/><path d="M11 8V14M8 11H14" stroke="#78a8da" stroke-width="1.6"/></svg><svg style="left:951px;top:684px" width="16" height="16" viewBox="0 0 16 16"><circle cx="8" cy="8" r="6.700" fill="#fff" stroke="#4a4a4a" stroke-width="1.400"/><path d="M8 4.500V8.500H11.500" fill="none" stroke="#2b5ea8" stroke-width="1.300"/></svg><div class="t w" style="left:970px;top:686px">0</div><svg style="left:989px;top:684px" width="16" height="15" viewBox="0 0 16 15"><rect x="0" y="1" width="16" height="3" fill="#7ba9d9"/><rect x="0" y="5.5" width="9" height="9" fill="#7ba9d9"/><rect x="10.5" y="5.5" width="5.5" height="9" fill="#7ba9d9"/></svg><div class="a" style="left:1025px;top:694px;width:2px;height:2px;background:#c9bf9f"></div><div class="a" style="left:1025px;top:697px;width:2px;height:2px;background:#c9bf9f"></div><div class="a" style="left:1022px;top:697px;width:2px;height:2px;background:#c9bf9f"></div><div class="a" style="left:1025px;top:700px;width:2px;height:2px;background:#c9bf9f"></div><div class="a" style="left:1022px;top:700px;width:2px;height:2px;background:#c9bf9f"></div><div class="a" style="left:1019px;top:700px;width:2px;height:2px;background:#c9bf9f"></div><div class="a" style="left:515px;top:265px;width:47px;height:27px;border:2px solid #e40810"></div><div class="a" style="left:263px;top:654px;width:78px;height:26px;border:2px solid #e40810"></div><svg style="pointer-events:none;left:0px;top:0px" width="1030" height="703" viewBox="0 0 1030 703"><path d="M532.4 297.5L499.4 487" stroke="#e40810" stroke-width="2.6" fill="none"/><path d="M533.4 291.6L537.4 301L532 298.6L525.6 300.6Z" fill="#e40810"/><path d="M497.9 495L493.9 482.2L499.6 485.6L505.6 483.2Z" fill="#e40810"/></svg>
<div class="a" style="left:0;top:0;width:1030px;height:703px;border:1px solid #e2dcd4;pointer-events:none"></div>
<!--STATUS-->
</body></html>
